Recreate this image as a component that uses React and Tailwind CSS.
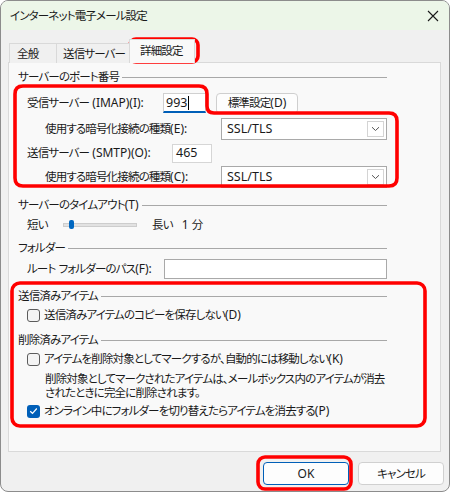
import React from "react";

const FONT = "font-['Noto_Sans','Noto_Sans_CJK_JP',sans-serif] [font-feature-settings:'palt']";

function L({ children }) {
  return <span className="text-[12px] tracking-normal">{children}</span>;
}

function Header({ children, className = "" }) {
  return (
    <div className={`flex items-center h-[16px] ${className}`}>
      <span className="whitespace-nowrap">{children}</span>
      <div className="flex-1 ml-[3px] h-px bg-[#a8a8a8]" />
    </div>
  );
}

function Select({ value }) {
  return (
    <div className="w-[166px] h-[22px] bg-white border border-[#a9a9a9] flex items-stretch p-[2px]">
      <div className="flex-1 flex items-center pl-[3px] text-[12.5px] tracking-normal">{value}</div>
      <div className="w-[17px] border border-[#d4d4d4] flex items-center justify-center">
        <svg width="9" height="6" viewBox="0 0 9 6">
          <path d="M1 1.2 L4.5 4.5 L8 1.2" fill="none" stroke="#555" strokeWidth="1" />
        </svg>
      </div>
    </div>
  );
}

function Checkbox({ checked }) {
  if (checked) {
    return (
      <div className="w-[13px] h-[13px] rounded-[3px] bg-[#005fb8] flex items-center justify-center shrink-0">
        <svg width="9" height="8" viewBox="0 0 9 8">
          <path d="M1.2 4.2 L3.5 6.3 L7.8 1.5" fill="none" stroke="white" strokeWidth="1.2" />
        </svg>
      </div>
    );
  }
  return <div className="w-[13px] h-[13px] rounded-[3px] border border-[#5c5c5c] bg-[#f4f4f4] shrink-0" />;
}

export default function App() {
  return (
    <div className={`relative w-[451px] h-[495px] bg-white text-[11.5px] tracking-[-0.85px] leading-[16px] text-[#1a1a1a] ${FONT}`}>
      <div className="w-[450px] h-[492px] border border-[#8c8c8c] rounded-[8px] overflow-hidden bg-[#f0f0f0] flex flex-col">
        {/* title bar */}
        <div className="h-[29px] bg-[#ecf6e8] flex items-center justify-between pl-[9px] pr-[9px] shrink-0">
          <span>インターネット電子メール設定</span>
          <svg width="12" height="12" viewBox="0 0 12 12" className="mr-[1px]">
            <path d="M1 1 L11 11 M11 1 L1 11" stroke="#1a1a1a" strokeWidth="1.1" />
          </svg>
        </div>

        {/* tabs */}
        <div className="flex items-end pl-[8px] mt-[8px] h-[24px] relative z-10">
          <div className="w-[48px] h-[20px] border border-[#d9d9d9] border-b-0 flex items-center pl-[7px] -mb-px bg-[#f0f0f0]">
            <span className="pt-[1px]">全般</span>
          </div>
          <div className="w-[73px] h-[20px] border border-[#d9d9d9] border-b-0 border-l-0 flex items-center pl-[6px] -mb-px bg-[#f0f0f0]">
            <span className="pt-[1px] whitespace-nowrap">送信サーバー</span>
          </div>
          <div className="w-[66px] h-[24px] border border-[#d9d9d9] border-b-0 -ml-px flex items-center pl-[10px] pb-[2px] -mb-px bg-[#f9f9f9]">
            <span>詳細設定</span>
          </div>
        </div>

        {/* panel */}
        <div className="ml-[7px] mr-[8px] h-[390px] border border-[#d9d9d9] bg-[#f9f9f9] pl-[9px] pr-[53px] flex flex-col">
          <Header className="mt-[6px]">サーバーのポート番号</Header>

          <div className="flex items-center h-[22px] mt-[7px] pl-[9px]">
            <span className="w-[136px] whitespace-nowrap">受信サーバー<L> (IMAP)(I):</L></span>
            <div className="w-[43px] h-[20px] bg-white border border-[#d0d0d0] border-b-2 border-b-[#005fb8] flex items-center pl-[2px] text-[12.5px] tracking-normal">
              993<span className="w-px h-[14px] bg-black ml-[1px]" />
            </div>
            <div className="ml-[10px] w-[82px] h-[21px] rounded-[4px] border border-[#cfcfcf] bg-[#fdfdfd] flex items-center justify-center">
              <span>標準設定<L>(D)</L></span>
            </div>
          </div>

          <div className="flex items-center h-[22px] mt-[4px] pl-[27px]">
            <span className="w-[176px] whitespace-nowrap">使用する暗号化接続の種類<L>(E):</L></span>
            <Select value="SSL/TLS" />
          </div>

          <div className="flex items-center h-[22px] mt-[2px] pl-[9px]">
            <span className="w-[145px] whitespace-nowrap">送信サーバー<L> (SMTP)(O):</L></span>
            <div className="w-[40px] h-[19px] bg-white border border-[#d6d6d6] flex items-center pl-[3px] text-[12.5px] tracking-normal">465</div>
          </div>

          <div className="flex items-center h-[22px] mt-[2px] pl-[27px]">
            <span className="w-[176px] whitespace-nowrap">使用する暗号化接続の種類<L>(C):</L></span>
            <Select value="SSL/TLS" />
          </div>

          <Header className="mt-[9px]">サーバーのタイムアウト<L>(T)</L></Header>

          <div className="flex items-center h-[16px] mt-[4px] pl-[9px]">
            <span className="w-[36px]">短い</span>
            <div className="relative w-[74px] h-[4px] bg-[#e2e2e2] border border-[#cdcdcd]">
              <div className="absolute left-[5px] top-[-4px] w-[5px] h-[9px] rounded-[2px] bg-[#0067c0]" />
            </div>
            <span className="ml-[15px]">長い</span>
            <span className="ml-[9px]"><L>1 </L>分</span>
          </div>

          <Header className="mt-[7px]">フォルダー</Header>

          <div className="flex items-center h-[20px] mt-[3px] pl-[9px]">
            <span className="w-[137px] whitespace-nowrap">ルート<L> </L>フォルダーのパス<L>(F):</L></span>
            <div className="flex-1 h-[20px] bg-white border border-[#a9a9a9]" />
          </div>

          <Header className="mt-[9px]">送信済みアイテム</Header>

          <div className="flex items-center h-[16px] mt-[3px] pl-[9px]">
            <Checkbox />
            <span className="ml-[4px] whitespace-nowrap">送信済みアイテムのコピーを保存しない<L>(D)</L></span>
          </div>

          <Header className="mt-[9px]">削除済みアイテム</Header>

          <div className="flex items-center h-[16px] mt-[3px] pl-[9px]">
            <Checkbox />
            <span className="ml-[4px] whitespace-nowrap">アイテムを削除対象としてマークするが、自動的には移動しない<L>(K)</L></span>
          </div>

          <div className="mt-[5px] pl-[27px] leading-[14px] whitespace-nowrap">
            <div>削除対象としてマークされたアイテムは、メールボックス内のアイテムが消去</div>
            <div>されたときに完全に削除されます。</div>
          </div>

          <div className="flex items-center h-[16px] mt-[3px] pl-[9px]">
            <Checkbox checked />
            <span className="ml-[4px] whitespace-nowrap">オンライン中にフォルダーを切り替えたらアイテムを消去する<L>(P)</L></span>
          </div>
        </div>

        {/* buttons */}
        <div className="flex justify-end gap-[9px] mt-[10px] pr-[5px]">
          <div className="w-[86px] h-[23px] rounded-[4px] border border-[#005fb8] bg-[#fdfdfd] flex items-center justify-center">
            <L>OK</L>
          </div>
          <div className="w-[86px] h-[23px] rounded-[4px] border border-[#d0d0d0] bg-[#fdfdfd] flex items-center justify-center">
            キャンセル
          </div>
        </div>
      </div>

      {/* red annotation overlays */}
      <svg className="absolute inset-0 pointer-events-none" width="451" height="495" viewBox="0 0 451 495">
        <g fill="none" stroke="#f00" strokeWidth="3.6">
          <rect x="130" y="39" width="68" height="23" rx="6" />
          <path d="M23 86 H199 Q207 86 207 94 V106 Q207 113 214 113 H389 Q397 113 397 121 V178 Q397 186 389 186 H23 Q15 186 15 178 V94 Q15 86 23 86 Z" />
          <rect x="12" y="283" width="413" height="143" rx="8" />
          <rect x="258" y="457" width="93" height="32" rx="7" />
        </g>
      </svg>
    </div>
  );
}
